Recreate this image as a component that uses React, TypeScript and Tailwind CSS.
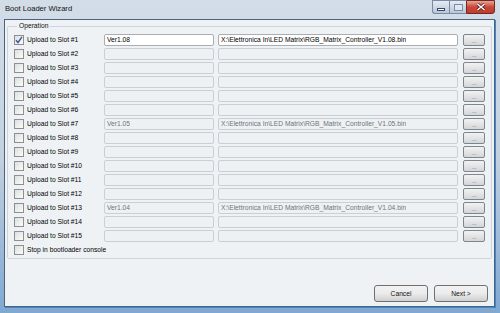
import { useState } from "react";

type Slot = { n: number; ver: string; path: string };

const slots: Slot[] = Array.from({ length: 15 }, (_, i) => {
  const n = i + 1;
  const v = n === 1 ? "1.08" : n === 7 ? "1.05" : n === 13 ? "1.04" : "";
  return {
    n,
    ver: v ? `Ver${v}` : "",
    path: v ? `X:\\Elettronica In\\LED Matrix\\RGB_Matrix_Controller_V${v}.bin` : "",
  };
});

function Check({ on }: { on?: boolean }) {
  return (
    <span className="flex h-[10px] w-[10px] shrink-0 items-center justify-center border border-[#8e8f8f] bg-gradient-to-br from-[#dcdfe2] to-[#fbfbfb]">
      {on && (
        <svg width="8" height="8" viewBox="0 0 8 8">
          <path d="M1 4.2 L3 6.5 L7 0.8" fill="none" stroke="#3d5a9e" strokeWidth="1.4" />
        </svg>
      )}
    </span>
  );
}

function Field({ text, active, w }: { text: string; active: boolean; w: string }) {
  return (
    <div
      className={`flex h-[12px] items-center rounded-[2px] border px-[2px] ${w} ${
        active ? "border-[#abadb3] bg-white text-black" : "border-[#c8cfd6] bg-[#eef1f3] text-[#6f747a]"
      }`}
    >
      <span className="truncate">{text}</span>
    </div>
  );
}

function Browse() {
  return (
    <button
      type="button"
      className="flex h-[12px] w-[22px] items-end justify-center rounded-[2px] border border-[#7d858d] bg-gradient-to-b from-[#f2f2f2] to-[#d3d6d9] pb-[1px] text-[6px] leading-[6px] text-[#555]"
    >
      ...
    </button>
  );
}

function Caption() {
  return (
    <div className="flex h-[14px] items-stretch self-start pr-[5px]">
      <div className="flex w-[17px] items-center justify-center rounded-bl-[3px] border border-r-0 border-[#7b8aa0] bg-gradient-to-b from-[#e4ebf3] to-[#b9c7d8]">
        <span className="mt-[4px] h-[3px] w-[8px] border border-[#3a4a66] bg-white" />
      </div>
      <div className="flex w-[17px] items-center justify-center border border-r-0 border-[#7b8aa0] bg-gradient-to-b from-[#e4ebf3] to-[#b9c7d8]">
        <span className="h-[7px] w-[9px] border border-[#7d8ca3] bg-[#dfe6ef]" />
      </div>
      <div className="flex w-[29px] items-center justify-center rounded-br-[3px] border border-[#6c2a22] bg-gradient-to-b from-[#e8a493] via-[#c9463a] to-[#c43a2b]">
        <svg width="10" height="8" viewBox="0 0 10 8">
          <path d="M1.5 1 L8.5 7 M8.5 1 L1.5 7" stroke="#5a1d16" strokeWidth="3" />
          <path d="M1.5 1 L8.5 7 M8.5 1 L1.5 7" stroke="#fff" strokeWidth="1.6" />
        </svg>
      </div>
    </div>
  );
}

export default function App() {
  const [checked] = useState(1);

  return (
    <div className="flex h-[313px] w-[500px] flex-col overflow-hidden bg-gradient-to-b from-[#d2dde8] via-[#c3d1df] to-[#7fa8d2] font-['Liberation_Sans',Arial,sans-serif] text-[6.7px] leading-[8px] text-black">
      {/* Title bar */}
      <div className="flex h-[19px] shrink-0 items-start justify-between">
        <span className="pl-[5px] pt-[4px] text-[7.6px] leading-[9px] text-[#111]">Boot Loader Wizard</span>
        <Caption />
      </div>

      {/* Frame + client */}
      <div className="flex min-h-0 flex-1 pb-[6px] pl-[4px] pr-[5px]">
        <div className="flex flex-1 flex-col border border-[#4f6378] bg-[#eef2f5] shadow-[1px_1px_0_#3f86cf]">
          {/* Group box */}
          <fieldset className="mx-[2px] mt-[2px] rounded-[2px] border border-[#cdd4db] px-[6px] pb-[1px]">
            <legend className="ml-[3px] px-[2px] leading-[8px] text-[#111]">Operation</legend>
            <div className="flex flex-col pt-[3px]">
              {slots.map((s) => (
                <div key={s.n} className="flex h-[14px] items-center">
                  <Check on={s.n === checked} />
                  <span className="ml-[3px] w-[77px]">Upload to Slot #{s.n}</span>
                  <Field text={s.ver} active={s.n === checked} w="w-[110px]" />
                  <div className="w-[4px]" />
                  <Field text={s.path} active={s.n === checked} w="w-[240px]" />
                  <div className="w-[5px]" />
                  <Browse />
                </div>
              ))}
              <div className="flex h-[14px] items-center">
                <Check />
                <span className="ml-[3px]">Stop in bootloader console</span>
              </div>
            </div>
          </fieldset>

          <div className="flex-1" />

          {/* Footer buttons */}
          <div className="flex justify-end gap-[6px] pb-[4px] pr-[6px]">
            {["Cancel", "Next >"].map((b) => (
              <button
                key={b}
                type="button"
                className="h-[17px] w-[54px] rounded-[3px] border border-[#707070] bg-gradient-to-b from-[#f2f2f2] via-[#ebebeb] to-[#cfcfcf] text-[6.7px] text-[#111]"
              >
                {b}
              </button>
            ))}
          </div>
        </div>
      </div>
    </div>
  );
}
